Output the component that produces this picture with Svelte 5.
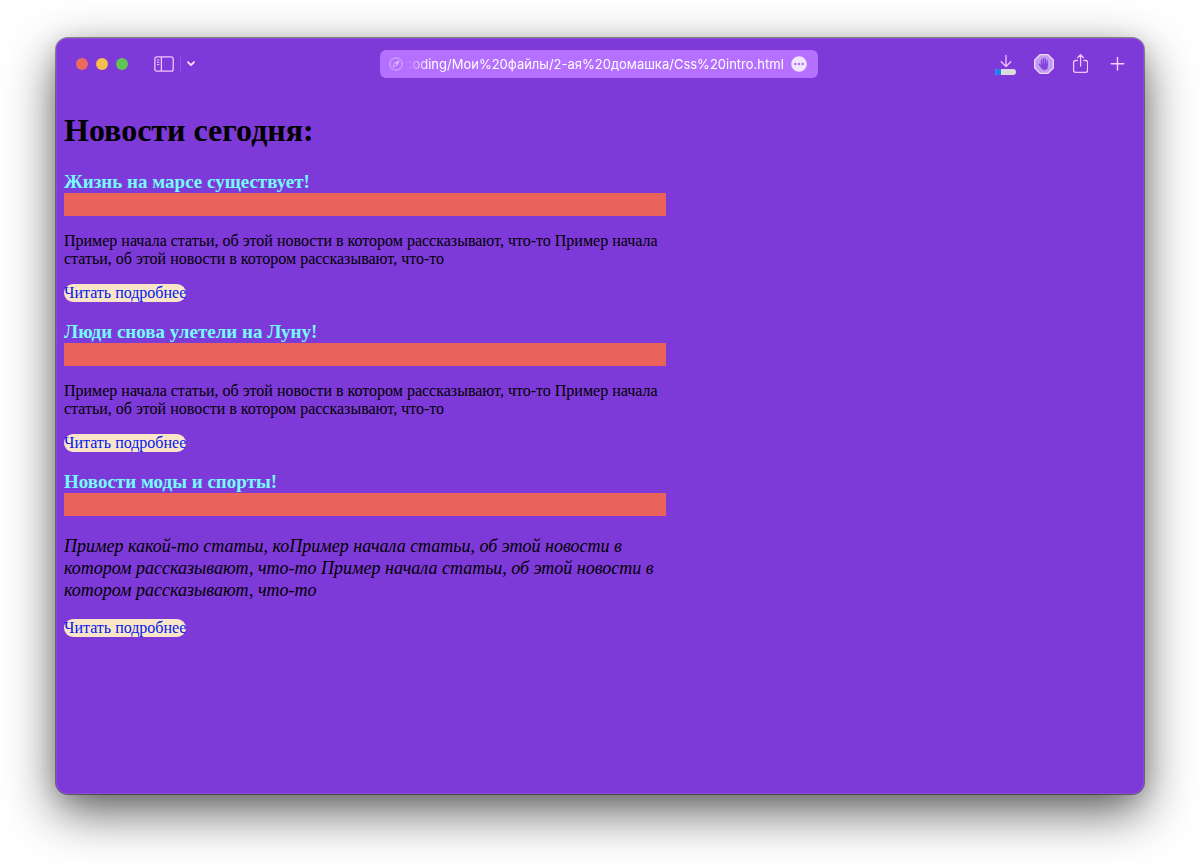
<script>
  const sample =
    'Пример начала статьи, об этой новости в котором рассказывают, что-то Пример начала статьи, об этой новости в котором рассказывают, что-то';

  const articles = [
    { title: 'Жизнь на марсе существует!', text: sample },
    { title: 'Люди снова улетели на Луну!', text: sample },
    { title: 'Новости моды и спорты!', text: 'Пример какой-то статьи, ко' + sample, accent: true }
  ];

  let address = $state('coding/Мои%20файлы/2-ая%20домашка/Css%20intro.html');
</script>

<div class="desktop">
  <div class="window">
    <header class="toolbar">
      <div class="group start">
        <div class="lights">
          <button class="light red" aria-label="Закрыть"></button>
          <button class="light yellow" aria-label="Свернуть"></button>
          <button class="light green" aria-label="Развернуть"></button>
        </div>
        <div class="sidebar">
          <button aria-label="Боковая панель">
            <svg width="20" height="16" viewBox="0 0 20 16" fill="none" stroke="#f3c3fb" stroke-width="1.3">
              <rect x="0.8" y="0.8" width="18.4" height="14.4" rx="2" />
              <path d="M7.4 1v14" />
              <path d="M2.8 4h2.6M2.8 6.3h2.6M2.8 8.6h2.6" stroke-width="1" />
            </svg>
          </button>
          <span class="divider"></span>
          <button aria-label="Группы вкладок">
            <svg width="8" height="6" viewBox="0 0 8 6" fill="none" stroke="#fbe6ff" stroke-width="1.7" stroke-linecap="round" stroke-linejoin="round">
              <path d="M1 1.2l3 3 3-3" />
            </svg>
          </button>
        </div>
      </div>

      <div class="address">
        <svg width="14" height="14" viewBox="0 0 14 14" fill="none" stroke="#dcb6ff" stroke-width="1">
          <circle cx="7" cy="7" r="6.2" />
          <path d="M10.2 3.8L8.2 8.2 3.8 10.2 5.8 5.8z" stroke-width="0.8" stroke-linejoin="round" />
          <path d="M10.2 3.8L5.8 5.8l2.4 2.4z" fill="#dcb6ff" stroke="none" />
        </svg>
        <input type="text" aria-label="Адрес" spellcheck="false" bind:value={address} />
        <button aria-label="Меню страницы">
          <svg width="16" height="16" viewBox="0 0 16 16">
            <circle cx="8" cy="8" r="7.8" fill="#f4e5ff" />
            <g fill="#b16cf8">
              <circle cx="4.4" cy="8" r="1.2" />
              <circle cx="8" cy="8" r="1.2" />
              <circle cx="11.6" cy="8" r="1.2" />
            </g>
          </svg>
        </button>
      </div>

      <div class="group end">
        <button aria-label="Загрузки">
          <svg width="22" height="22" viewBox="0 0 22 22" fill="none">
            <path d="M12 2.4v11M7.2 8.8l4.8 4.7 4.8-4.7" stroke="#f3c3fb" stroke-width="1.3" stroke-linecap="round" stroke-linejoin="round" />
            <rect x="1" y="16" width="21" height="6" rx="3" fill="#dcdcdc" />
            <path d="M7 16H4a3 3 0 0 0 0 6h3z" fill="#1e82f5" />
          </svg>
        </button>
        <button aria-label="Блокировщик рекламы">
          <svg width="20" height="20" viewBox="0 0 20 20">
            <path d="M6.1 .7h7.8l5.4 5.4v7.8l-5.4 5.4H6.1L.7 13.9V6.1z" fill="#c39bf2" stroke="#ead9fb" stroke-width="1.3" />
            <g fill="none" stroke="#8444dc" stroke-width="1.4" stroke-linecap="round">
              <path d="M7.5 10.5V6M9.4 10V4.6M11.3 10V5M13.1 10.5V6.8M7 12.7L5.2 10.2" />
            </g>
            <path d="M6.8 9.4h7v3.1c0 2-1.2 3.5-3.2 3.5-1.9 0-3-1-3.9-3z" fill="#8444dc" />
          </svg>
        </button>
        <button aria-label="Поделиться">
          <svg width="16" height="20" viewBox="0 0 16 20" fill="none" stroke="#f3c3fb" stroke-width="1.3" stroke-linecap="round" stroke-linejoin="round">
            <path d="M5.4 6.5H3.6a2 2 0 0 0-2 2v7.8a2 2 0 0 0 2 2h10a2 2 0 0 0 2-2V8.5a2 2 0 0 0-2-2h-1.8" />
            <path d="M8.6 12V1M5.8 3.5L8.6.8l2.8 2.7" />
          </svg>
        </button>
        <button aria-label="Новая вкладка">
          <svg width="22" height="22" viewBox="0 0 22 22" fill="none" stroke="#f7d0ff" stroke-width="1.4" stroke-linecap="round">
            <path d="M11.5 4.5v12.6M5.2 10.8h12.6" />
          </svg>
        </button>
      </div>
    </header>

    <main>
      <h1>Новости сегодня:</h1>
      {#each articles as article}
        <article>
          <h3>{article.title}</h3>
          <div class="banner"></div>
          <p class:accent={article.accent}>{article.text}</p>
          <a href="#more">Читать подробнее</a>
        </article>
      {/each}
    </main>
  </div>
</div>

<style>
  :global(body) {
    margin: 0;
    background: #fff;
  }

  .desktop {
    box-sizing: border-box;
    display: flex;
    min-height: 100vh;
    padding: 38px 56px 74px;
    overflow: hidden;
  }

  .window {
    flex: 1;
    min-width: 0;
    border-radius: 12px;
    background: #7e3ad9;
    box-shadow:
      inset 0 0 0 1px #8a49df,
      0 0 0 1px rgba(0, 0, 0, 0.4),
      0 18px 50px rgba(0, 0, 0, 0.62),
      0 4px 20px rgba(0, 0, 0, 0.12);
  }

  button {
    display: block;
    flex: none;
    padding: 0;
    border: 0;
    background: none;
  }

  svg {
    display: block;
    flex: none;
  }

  .toolbar {
    display: grid;
    grid-template-columns: 1fr minmax(0, 438px) 1fr;
    align-items: center;
    height: 52px;
    padding: 0 16px 0 14px;
  }

  .group {
    display: flex;
    align-items: center;
  }

  .start {
    gap: 26px;
    padding-left: 6px;
  }

  .end {
    justify-content: flex-end;
    gap: 18px;
  }

  .lights {
    display: flex;
    gap: 8px;
  }

  .light {
    width: 12px;
    height: 12px;
    border-radius: 50%;
  }

  .red {
    background: #ed6a5e;
  }

  .yellow {
    background: #f5bf4f;
  }

  .green {
    background: #61c454;
  }

  .sidebar {
    display: flex;
    align-items: center;
    gap: 6px;
  }

  .divider {
    width: 1px;
    height: 18px;
    background: #9150e2;
  }

  .address {
    display: flex;
    align-items: center;
    gap: 2px;
    height: 28px;
    padding: 0 11px 0 9px;
    border-radius: 6px;
    background: #b570ff;
    box-sizing: border-box;
  }

  input {
    flex: 1;
    min-width: 0;
    height: 20px;
    padding: 0;
    border: 0;
    outline: 0;
    background: none;
    color: #fff;
    font: 400 13px/20px Inter, sans-serif;
    -webkit-mask-image: linear-gradient(to right, transparent, #000 24px);
    mask-image: linear-gradient(to right, transparent, #000 24px);
  }

  main {
    padding: 22px 8px 0;
    color: #000;
    font: 16px/18px 'Liberation Serif', serif;
  }

  h1 {
    margin: 0 0 23px;
    font-size: 32px;
    line-height: 36px;
  }

  article {
    max-width: 602px;
    margin-bottom: 19px;
  }

  h3 {
    margin: 0;
    color: #74fbfd;
    font-size: 19px;
    line-height: 22px;
  }

  .banner {
    height: 23px;
    background: #eb625b;
  }

  p {
    margin: 16px 0;
  }

  .accent {
    margin: 19px 0 18px;
    font-size: 18px;
    font-style: italic;
    line-height: 22px;
  }

  a {
    display: block;
    width: fit-content;
    border-radius: 10px;
    background: #fbe5c8;
    color: #0018f0;
    text-decoration: none;
  }
</style>
